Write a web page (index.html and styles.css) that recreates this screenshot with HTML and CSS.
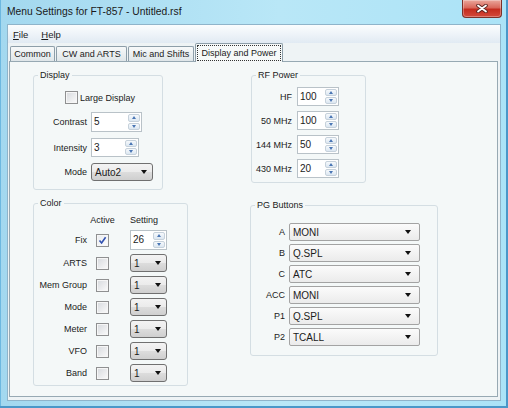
FILE: index.html
```html
<!DOCTYPE html>
<html lang="en">
<head>
    <meta charset="UTF-8">
    <title>Menu Settings for FT-857 - Untitled.rsf</title>
    <link rel="stylesheet" href="styles.css">
</head>
<body>

<div class="window">
    <div class="titlebar">
        <span class="title">Menu Settings for FT-857 - Untitled.rsf</span>
        <div class="close-btn">
            <svg width="12" height="9" viewBox="0 0 12 9">
                <path d="M2 1.5 L10 7.5 M10 1.5 L2 7.5" stroke="#5a2420" stroke-width="3.6" stroke-linecap="round"/>
                <path d="M2 1.5 L10 7.5 M10 1.5 L2 7.5" stroke="#fff" stroke-width="1.8" stroke-linecap="round"/>
            </svg>
        </div>
    </div>

    <div class="client">
        <div class="menubar">
            <span class="menu-item"><u>F</u>ile</span>
            <span class="menu-item"><u>H</u>elp</span>
        </div>

        <div class="tabs">
            <div class="tab tab-common">Common</div>
            <div class="tab tab-cw">CW and ARTS</div>
            <div class="tab tab-mic">Mic and Shifts</div>
            <div class="tab tab-display active"><span class="focus">Display and Power</span></div>
        </div>

        <div class="tab-page">
            <!-- left column -->
            <div class="column">
                <fieldset class="group display-group">
                    <legend>Display</legend>
                    <div class="check-row"><span class="checkbox"></span>Large Display</div>
                    <div class="form-grid">
                        <span class="field-label">Contrast</span>
                        <div class="spin spin-contrast">
                            <span class="spin-value">5</span>
                            <span class="spin-btns"><span class="spin-up"></span><span class="spin-down"></span></span>
                        </div>
                        <span class="field-label">Intensity</span>
                        <div class="spin spin-intensity">
                            <span class="spin-value">3</span>
                            <span class="spin-btns"><span class="spin-up"></span><span class="spin-down"></span></span>
                        </div>
                        <span class="field-label">Mode</span>
                        <div class="combo combo-mode"><span>Auto2</span></div>
                    </div>
                </fieldset>

                <fieldset class="group color-group">
                    <legend>Color</legend>
                    <div class="color-grid">
                        <span></span>
                        <span class="col-head">Active</span>
                        <span class="col-head setting-cell">Setting</span>

                        <span class="field-label">Fix</span>
                        <span class="checkbox checked">
                            <svg width="11" height="11" viewBox="0 0 11 11"><path d="M2.5 5.5 L4.6 8 L8.6 2.2" fill="none" stroke="#3050b0" stroke-width="1.6"/></svg>
                        </span>
                        <div class="spin spin-fix setting-cell">
                            <span class="spin-value">26</span>
                            <span class="spin-btns"><span class="spin-up"></span><span class="spin-down"></span></span>
                        </div>

                        <span class="field-label">ARTS</span>
                        <span class="checkbox"></span>
                        <div class="combo combo-small setting-cell"><span>1</span></div>

                        <span class="field-label">Mem Group</span>
                        <span class="checkbox"></span>
                        <div class="combo combo-small setting-cell"><span>1</span></div>

                        <span class="field-label">Mode</span>
                        <span class="checkbox"></span>
                        <div class="combo combo-small setting-cell"><span>1</span></div>

                        <span class="field-label">Meter</span>
                        <span class="checkbox"></span>
                        <div class="combo combo-small setting-cell"><span>1</span></div>

                        <span class="field-label">VFO</span>
                        <span class="checkbox"></span>
                        <div class="combo combo-small setting-cell"><span>1</span></div>

                        <span class="field-label">Band</span>
                        <span class="checkbox"></span>
                        <div class="combo combo-small setting-cell"><span>1</span></div>
                    </div>
                </fieldset>
            </div>

            <!-- right column -->
            <div class="column">
                <fieldset class="group rf-group">
                    <legend>RF Power</legend>
                    <div class="rf-grid">
                        <span class="field-label">HF</span>
                        <div class="spin spin-rf">
                            <span class="spin-value">100</span>
                            <span class="spin-btns"><span class="spin-up"></span><span class="spin-down"></span></span>
                        </div>
                        <span class="field-label">50 MHz</span>
                        <div class="spin spin-rf">
                            <span class="spin-value">100</span>
                            <span class="spin-btns"><span class="spin-up"></span><span class="spin-down"></span></span>
                        </div>
                        <span class="field-label">144 MHz</span>
                        <div class="spin spin-rf">
                            <span class="spin-value">50</span>
                            <span class="spin-btns"><span class="spin-up"></span><span class="spin-down"></span></span>
                        </div>
                        <span class="field-label">430 MHz</span>
                        <div class="spin spin-rf">
                            <span class="spin-value">20</span>
                            <span class="spin-btns"><span class="spin-up"></span><span class="spin-down"></span></span>
                        </div>
                    </div>
                </fieldset>

                <fieldset class="group pg-group">
                    <legend>PG Buttons</legend>
                    <div class="pg-grid">
                        <span class="field-label">A</span>
                        <div class="combo combo-flat"><span>MONI</span></div>
                        <span class="field-label">B</span>
                        <div class="combo combo-flat"><span>Q.SPL</span></div>
                        <span class="field-label">C</span>
                        <div class="combo combo-flat"><span>ATC</span></div>
                        <span class="field-label">ACC</span>
                        <div class="combo combo-flat"><span>MONI</span></div>
                        <span class="field-label">P1</span>
                        <div class="combo combo-flat"><span>Q.SPL</span></div>
                        <span class="field-label">P2</span>
                        <div class="combo combo-flat"><span>TCALL</span></div>
                    </div>
                </fieldset>
            </div>
        </div>
    </div>
</div>

</body>
</html>
```

FILE: styles.css
```css
* {
    box-sizing: border-box;
}
body {
    margin: 0;
    font-family: "Liberation Sans", Arial, sans-serif;
    font-size: 9px;
    color: #1b1b1b;
    background: #a9dcf1;
}
.window {
    width: 508px;
    height: 408px;
    display: flex;
    flex-direction: column;
    background: linear-gradient(to right, #a3d8ef, #b9e7f7 55%, #abe3f7);
    box-shadow: inset -2px -2px 0 #4a97c8, inset 1px 0 0 #6db8e0;
}
.titlebar {
    height: 24px;
    flex-shrink: 0;
    display: flex;
    justify-content: space-between;
    align-items: flex-start;
    padding: 0 6px 0 7px;
}
.title {
    padding-top: 6px;
    font-size: 10.3px;
    line-height: 12px;
    color: #1a1a1a;
}
.close-btn {
    width: 40px;
    height: 18px;
    border: 1px solid #7c3029;
    border-top: none;
    border-radius: 0 0 4px 4px;
    background: linear-gradient(#eaa79c, #d9685b 45%, #c42c1e 55%, #d3493b);
    box-shadow: inset 0 0 0 1px rgba(255, 255, 255, 0.3);
    display: flex;
    align-items: center;
    justify-content: center;
}
.client {
    flex: 1;
    margin: 0 7px 7px 7px;
    border: 1px solid #8fb4ca;
    background: #eef3f5;
    display: flex;
    flex-direction: column;
}
.menubar {
    height: 18px;
    display: flex;
    align-items: center;
    gap: 13px;
    padding-left: 5px;
    background: linear-gradient(#fbfdfe, #e1eaf3);
    font-size: 9.5px;
}
.tabs {
    height: 18px;
    display: flex;
    align-items: flex-end;
    padding-left: 2px;
}
.tab {
    height: 15px;
    line-height: 14px;
    text-align: center;
    white-space: nowrap;
    border: 1px solid #8d9ea9;
    border-bottom: none;
    border-radius: 2px 2px 0 0;
    background: linear-gradient(#f7f9fa, #dfe6e9);
    margin-right: 1px;
}
.tab-common {
    width: 45px;
}
.tab-cw {
    width: 71px;
}
.tab-mic {
    width: 66px;
}
.tab-display {
    width: 88px;
}
.tab.active {
    height: 19px;
    margin-bottom: -1px;
    padding: 1px;
    background: #f6f9f9;
    position: relative;
    z-index: 1;
}
.tab .focus {
    display: block;
    height: 100%;
    line-height: 15px;
    border: 1px dotted #333;
}
.tab-page {
    flex: 1;
    margin: 0 2px 3px 1px;
    border: 1px solid #97a9b3;
    background: #f4f8f8;
    display: grid;
    grid-template-columns: 155px 188px;
    column-gap: 62px;
    align-content: start;
    padding: 8px 0 0 23px;
}
.column {
    display: flex;
    flex-direction: column;
    align-items: flex-start;
}
.group {
    margin: 0;
    padding: 0;
    border: 1px solid #d4dee3;
    border-radius: 3px;
    min-width: 0;
}
.group legend {
    margin-left: 4px;
    padding: 0 2px;
    line-height: 11px;
}
.display-group {
    width: 130px;
    height: 120px;
}
.color-group {
    width: 155px;
    height: 188px;
    margin-top: 8px;
}
.rf-group {
    width: 115px;
    height: 113px;
    margin-left: 1px;
}
.pg-group {
    width: 188px;
    height: 156px;
    margin-top: 17px;
}
.field-label {
    justify-self: end;
    white-space: nowrap;
}
.check-row {
    display: flex;
    align-items: center;
    gap: 2px;
    height: 13px;
    margin: 10px 0 0 31px;
}
.checkbox {
    width: 13px;
    height: 13px;
    border: 1px solid #8f9091;
    background: linear-gradient(135deg, #d6d9dd, #fbfbfb);
    box-shadow: inset 0 0 0 1px #f6f6f6;
    display: flex;
    align-items: center;
    justify-content: center;
}
.checked {
    background: linear-gradient(135deg, #e8ebef, #fdfdfd);
}
.form-grid {
    display: grid;
    grid-template-columns: 53px auto;
    column-gap: 4px;
    row-gap: 6px;
    align-items: center;
    justify-items: start;
    margin-top: 8px;
}
.spin {
    display: flex;
    height: 20px;
    border: 1px solid #b9c2c8;
    background: #fff;
}
.spin-value {
    flex: 1;
    padding: 3px 0 0 2px;
    font-size: 10px;
    line-height: 12px;
}
.spin-btns {
    width: 14px;
    display: flex;
    flex-direction: column;
    gap: 1px;
    padding: 1px;
}
.spin-btns span {
    flex: 1;
    border: 1px solid #c6d1db;
    border-radius: 2px;
    background: linear-gradient(#f6f9fc, #dce7f1);
    display: flex;
    align-items: center;
    justify-content: center;
}
.spin-up::after {
    content: "";
    border-left: 2.5px solid transparent;
    border-right: 2.5px solid transparent;
    border-bottom: 3px solid #4a76b4;
}
.spin-down::after {
    content: "";
    border-left: 2.5px solid transparent;
    border-right: 2.5px solid transparent;
    border-top: 3px solid #4a76b4;
}
.spin-contrast {
    width: 51px;
}
.spin-intensity {
    width: 48px;
    height: 19px;
}
.spin-fix {
    width: 37px;
}
.spin-rf {
    width: 42px;
    height: 19px;
}
.combo {
    display: flex;
    align-items: center;
    justify-content: space-between;
    height: 18px;
    padding: 0 5px 0 3px;
    border: 1px solid #707070;
    border-radius: 3px;
    background: linear-gradient(#f3f3f3 0, #ebebeb 50%, #dddddd 50%, #cfcfcf 100%);
    font-size: 10px;
}
.combo::after {
    content: "";
    border-left: 3.5px solid transparent;
    border-right: 3.5px solid transparent;
    border-top: 4px solid #111;
}
.combo-mode {
    width: 62px;
}
.combo-small {
    width: 37px;
}
.combo-flat {
    width: 131px;
    padding-right: 8px;
    border-color: #a3a3a3;
    border-radius: 2px;
    background: linear-gradient(#fbfbfb, #ebebeb);
}
.color-grid {
    display: grid;
    grid-template-columns: 53px 31px auto;
    row-gap: 4px;
    align-items: center;
    justify-items: start;
    padding-top: 6px;
}
.color-grid .checkbox {
    justify-self: center;
}
.col-head {
    justify-self: center;
    line-height: 11px;
}
.setting-cell {
    margin-left: 12px;
    justify-self: start;
}
.rf-grid {
    display: grid;
    grid-template-columns: 40px auto;
    column-gap: 5px;
    row-gap: 5px;
    align-items: center;
    justify-items: start;
    padding-top: 6px;
}
.pg-grid {
    display: grid;
    grid-template-columns: 34px 131px;
    column-gap: 4px;
    row-gap: 3px;
    align-items: center;
    padding-top: 12px;
}
```
